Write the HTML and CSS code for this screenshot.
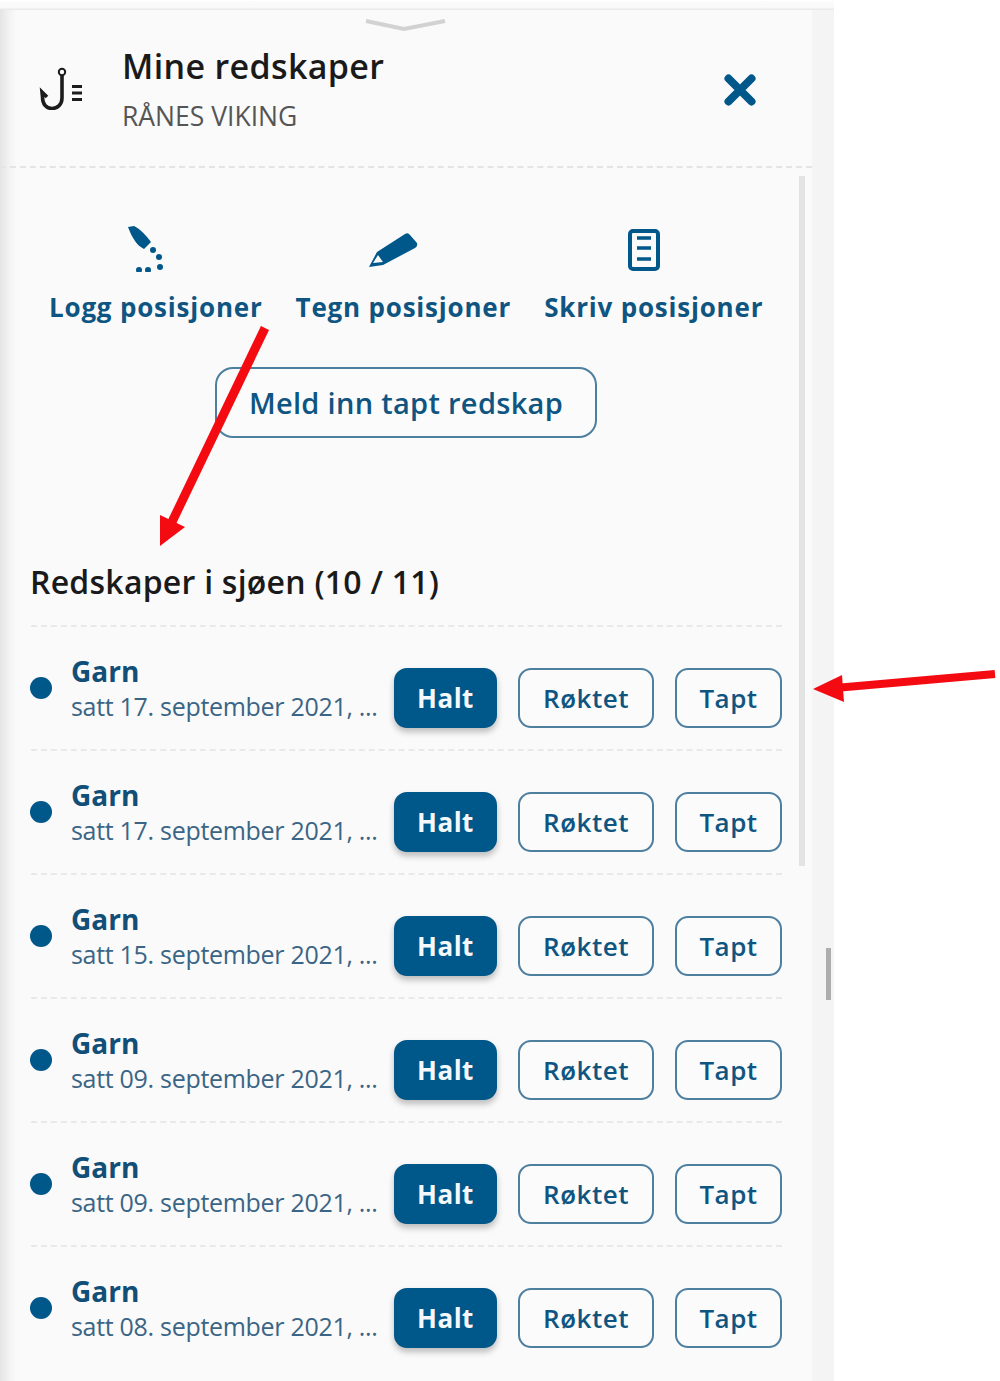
FILE: index.html
```html
<!DOCTYPE html>
<html lang="no">
<head>
    <meta charset="UTF-8">
    <title>Mine redskaper</title>
    <link rel="stylesheet" href="styles.css">
</head>
<body>
    <div class="page">
        <aside class="panel">
            <svg class="grabber" width="84" height="14" viewBox="0 0 84 14"><path d="M2 3 L40 11 L81 3" fill="none" stroke="#d2d2d2" stroke-width="4"/></svg>
            <header class="panel-head">
                <svg class="hook-icon" width="46" height="46" viewBox="0 0 46 46">
                    <circle cx="23" cy="8" r="3.2" fill="none" stroke="#1c1c1c" stroke-width="2"/>
                    <path d="M23 11 V34 C23 41 18 44.5 13 44.5 C7 44.5 3.5 40 3.5 33 L3 28 L8 33" fill="none" stroke="#1c1c1c" stroke-width="3.6"/>
                    <path d="M33 22.5 H43 M33 29 H43 M33 35.5 H43" stroke="#1c1c1c" stroke-width="3"/>
                </svg>
                <div class="head-text">
                    <h1>Mine redskaper</h1>
                    <p>RÅNES VIKING</p>
                </div>
                <svg class="close-icon" width="34" height="34" viewBox="0 0 34 34"><path d="M5.5 5.5 L28.5 28.5 M28.5 5.5 L5.5 28.5" stroke="#00578a" stroke-width="8" stroke-linecap="round"/></svg>
            </header>

            <div class="actions">
                <a class="action">
                    <svg width="40" height="50" viewBox="0 0 40 50">
                        <path d="M2 5 L8 4 C14 7 20 13 25 20 L18 27 C14 25 11 22 9 19 C6 15 4 10 2 5 Z" fill="#00578a"/>
                        <g fill="#00578a"><circle cx="27" cy="28" r="3"/><circle cx="33" cy="35" r="3"/><circle cx="34" cy="45" r="3"/><circle cx="22" cy="48" r="3"/><circle cx="13" cy="48" r="3"/></g>
                    </svg>
                    <span>Logg posisjoner</span>
                </a>
                <a class="action">
                    <svg width="50" height="50" viewBox="0 0 50 50">
                        <path d="M1 45 L9 30 L37 12 Q40 10 42 13 L49 21 Q50 24 47 26 L15 43 Z" fill="#00578a"/>
                        <path d="M5 41 L10 33 L15 40 Z" fill="#fafafa"/>
                    </svg>
                    <span>Tegn posisjoner</span>
                </a>
                <a class="action">
                    <svg width="36" height="50" viewBox="0 0 36 50">
                        <rect x="4" y="9" width="28" height="38" rx="3" fill="none" stroke="#00578a" stroke-width="4"/>
                        <path d="M11 16 H25 M11 26 H25 M11 37 H25" stroke="#00578a" stroke-width="3.6"/>
                    </svg>
                    <span>Skriv posisjoner</span>
                </a>
            </div>

            <div class="report-wrap"><button class="btn report-btn">Meld inn tapt redskap</button></div>

            <h2 class="list-title">Redskaper i sjøen (10 / 11)</h2>

            <ul class="gear-list">
                <li class="gear-row">
                    <span class="dot"></span>
                    <div class="gear-info"><strong>Garn</strong><small>satt 17. september 2021, ...</small></div>
                    <button class="btn btn-fill">Halt</button><button class="btn btn-done">Røktet</button><button class="btn btn-lost">Tapt</button>
                </li>
                <li class="gear-row">
                    <span class="dot"></span>
                    <div class="gear-info"><strong>Garn</strong><small>satt 17. september 2021, ...</small></div>
                    <button class="btn btn-fill">Halt</button><button class="btn btn-done">Røktet</button><button class="btn btn-lost">Tapt</button>
                </li>
                <li class="gear-row">
                    <span class="dot"></span>
                    <div class="gear-info"><strong>Garn</strong><small>satt 15. september 2021, ...</small></div>
                    <button class="btn btn-fill">Halt</button><button class="btn btn-done">Røktet</button><button class="btn btn-lost">Tapt</button>
                </li>
                <li class="gear-row">
                    <span class="dot"></span>
                    <div class="gear-info"><strong>Garn</strong><small>satt 09. september 2021, ...</small></div>
                    <button class="btn btn-fill">Halt</button><button class="btn btn-done">Røktet</button><button class="btn btn-lost">Tapt</button>
                </li>
                <li class="gear-row">
                    <span class="dot"></span>
                    <div class="gear-info"><strong>Garn</strong><small>satt 09. september 2021, ...</small></div>
                    <button class="btn btn-fill">Halt</button><button class="btn btn-done">Røktet</button><button class="btn btn-lost">Tapt</button>
                </li>
                <li class="gear-row">
                    <span class="dot"></span>
                    <div class="gear-info"><strong>Garn</strong><small>satt 08. september 2021, ...</small></div>
                    <button class="btn btn-fill">Halt</button><button class="btn btn-done">Røktet</button><button class="btn btn-lost">Tapt</button>
                </li>
            </ul>
            <div class="scrollbar-inner"></div>
        </aside>
        <div class="scroll-gutter"><div class="scrollbar-outer"></div></div>
    </div>

    <!-- annotation arrows on top of the screenshot -->
    <svg class="arrows" width="1000" height="1381" viewBox="0 0 1000 1381">
        <path d="M265 328 L171 524" stroke="#f40b12" stroke-width="9" fill="none"/>
        <path d="M160 546 L160 515 L185 527 Z" fill="#f40b12"/>
        <path d="M995 674 L835 688" stroke="#f40b12" stroke-width="8" fill="none"/>
        <path d="M813 689 L842 675 L844 702 Z" fill="#f40b12"/>
    </svg>
</body>
</html>
```

FILE: styles.css
```css
/* Stile generale */
body {
    margin: 0;
    background: #fff;
    font-family: "Open Sans", "Noto Sans", sans-serif;
    overflow: hidden;
}

.page {
    display: flex;
    width: 834px;
    height: 1381px;
    padding-top: 9px;
    box-sizing: border-box;
    border-top: 1px solid #fff;
    overflow: hidden;
    position: relative;
}

.page::before {
    content: "";
    position: absolute;
    left: 0;
    top: 0;
    width: 834px;
    height: 9px;
    background: linear-gradient(to bottom, #fbfbfb, #fafafa 70%, #e6e6e6);
}

.panel {
    width: 812px;
    flex: none;
    position: relative;
    background: #fafafa;
    background-image: linear-gradient(to right, #e4e4e4, #f4f4f4 10px, #fafafa 16px);
}

.scroll-gutter {
    flex: 1;
    position: relative;
    background: #f4f4f4;
}

.scrollbar-outer {
    position: absolute;
    left: 14px;
    top: 938px;
    width: 5px;
    height: 52px;
    background: #adadad;
}

.scrollbar-inner {
    position: absolute;
    left: 799px;
    top: 166px;
    width: 6px;
    height: 690px;
    background: #e3e3e3;
}

.grabber {
    position: absolute;
    left: 364px;
    top: 8px;
}

.panel-head {
    height: 156px;
    display: flex;
    align-items: center;
    border-bottom: 2px dashed #e4e4e4;
    padding-left: 39px;
    box-sizing: content-box;
}

.hook-icon {
    flex: none;
    margin-top: -2px;
}

.head-text {
    margin-left: 37px;
    flex: 1;
}

.head-text h1 {
    margin: 0;
    font-size: 34px;
    line-height: 46px;
    font-weight: 600;
    color: #1a1a1a;
    letter-spacing: 0.35px;
}

.head-text p {
    margin: 10px 0 0;
    font-size: 26.5px;
    line-height: 34px;
    color: #555;
}

.close-icon {
    margin: 4px 55px 0 0;
    flex: none;
}

.actions {
    display: flex;
    padding: 54px 0 0 49px;
    gap: 33px;
}

.action {
    display: flex;
    flex-direction: column;
    align-items: center;
    color: #0f5581;
    font-size: 26px;
    line-height: 36px;
    font-weight: 700;
    letter-spacing: 0.8px;
}

/* le icone non sono centrate sul testo */
.action svg {
    display: block;
    margin: 0 20px 17px 0;
}

.btn {
    font-family: inherit;
    font-size: 26px;
    font-weight: 600;
    letter-spacing: 0.5px;
    color: #0f5581;
    background: #fbfbfb;
    border: 2px solid #4d7f9f;
    border-radius: 13px;
    padding: 0;
    box-sizing: border-box;
}

.report-wrap {
    padding: 42px 0 0 215px;
}

.report-btn {
    width: 382px;
    height: 71px;
    font-size: 29px;
    letter-spacing: 0.3px;
    border-radius: 18px;
}

.list-title {
    margin: 122px 0 0 30px;
    font-size: 32px;
    line-height: 44px;
    font-weight: 600;
    color: #1a1a1a;
    letter-spacing: 0.24px;
}

.gear-list {
    list-style: none;
    margin: 21px 0 0;
    padding: 0 31px;
    width: 751px;
}

.gear-row {
    display: flex;
    align-items: center;
    height: 122px;
    border-top: 2px dashed #e9e9e9;
}

.dot {
    width: 22px;
    height: 22px;
    border-radius: 50%;
    background: #00578a;
    flex: none;
    margin: -1px 0 0 -1px;
}

.gear-info {
    margin-left: 19px;
    width: 323px;
    flex: none;
}

.gear-info strong {
    display: block;
    font-size: 28px;
    line-height: 36px;
    font-weight: 700;
    color: #124f78;
}

.gear-info small {
    display: block;
    font-size: 25px;
    line-height: 34px;
    color: #3a6585;
    white-space: nowrap;
    letter-spacing: -0.3px;
}

.gear-row .btn {
    height: 60px;
    flex: none;
    margin-top: 20px;
}

.btn-fill {
    width: 103px;
    background: #00578a;
    border-color: #00578a;
    color: #f4f8fa;
    box-shadow: 0 4px 6px rgba(0, 0, 0, 0.25);
    font-weight: 700;
}

.btn-done {
    width: 136px;
    margin-left: 21px;
}

.btn-lost {
    width: 107px;
    margin-left: 21px;
}

.arrows {
    position: absolute;
    left: 0;
    top: 0;
    pointer-events: none;
}
```
